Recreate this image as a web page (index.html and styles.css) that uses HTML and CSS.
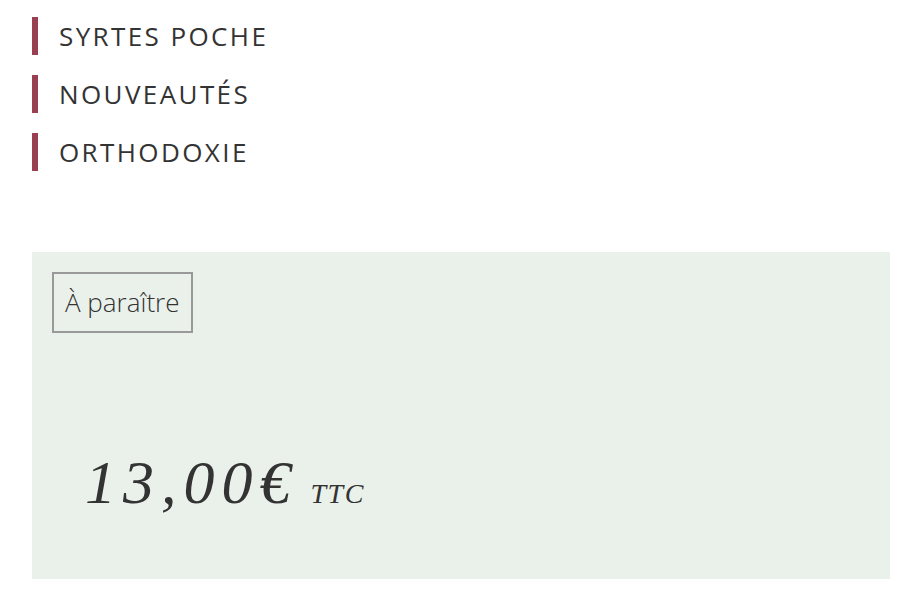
FILE: index.html
```html
<!DOCTYPE html>
<html lang="fr">
<head>
<meta charset="utf-8">
<title>Livre</title>
<link rel="stylesheet" href="styles.css">
</head>
<body>
<ul class="cats">
  <li class="cat">SYRTES POCHE</li>
  <li class="cat">NOUVEAUTÉS</li>
  <li class="cat">ORTHODOXIE</li>
</ul>
<section class="buy">
  <span class="badge">À paraître</span>
  <p class="price"><span class="amount">13,00€</span><span class="tax">TTC</span></p>
</section>
</body>
</html>
```
FILE: styles.css
```css
html, body {
  margin: 0;
  padding: 0;
  background: #fff;
}
body {
  font-family: "Open Sans", "Liberation Sans", sans-serif;
  color: #333;
}
.cats {
  list-style: none;
  margin: 0;
  padding: 17px 0 0 32px;
}
.cat {
  display: flex;
  align-items: center;
  height: 38px;
  border-left: 6px solid #98404f;
  padding-left: 21px;
  margin-bottom: 20px;
  font-size: 26px;
  letter-spacing: 2.4px;
  line-height: 1;
}
.buy {
  margin: 81px 8px 0 32px;
  height: 327px;
  box-sizing: border-box;
  padding: 20px;
  background: #eaf1eb;
}
.badge {
  display: inline-block;
  border: 2px solid #999;
  padding: 0 11px;
  height: 57px;
  line-height: 57px;
  font-size: 26px;
  font-weight: 300;
  color: #333;
}
.price {
  margin: 118px 0 0 33px;
  font-family: "Liberation Serif", "Times New Roman", serif;
  font-style: italic;
  color: #333;
  line-height: 1;
}
.amount {
  font-size: 62px;
  letter-spacing: 7px;
}
.tax {
  margin-left: 13px;
  font-size: 28px;
  letter-spacing: 1.5px;
}
```
